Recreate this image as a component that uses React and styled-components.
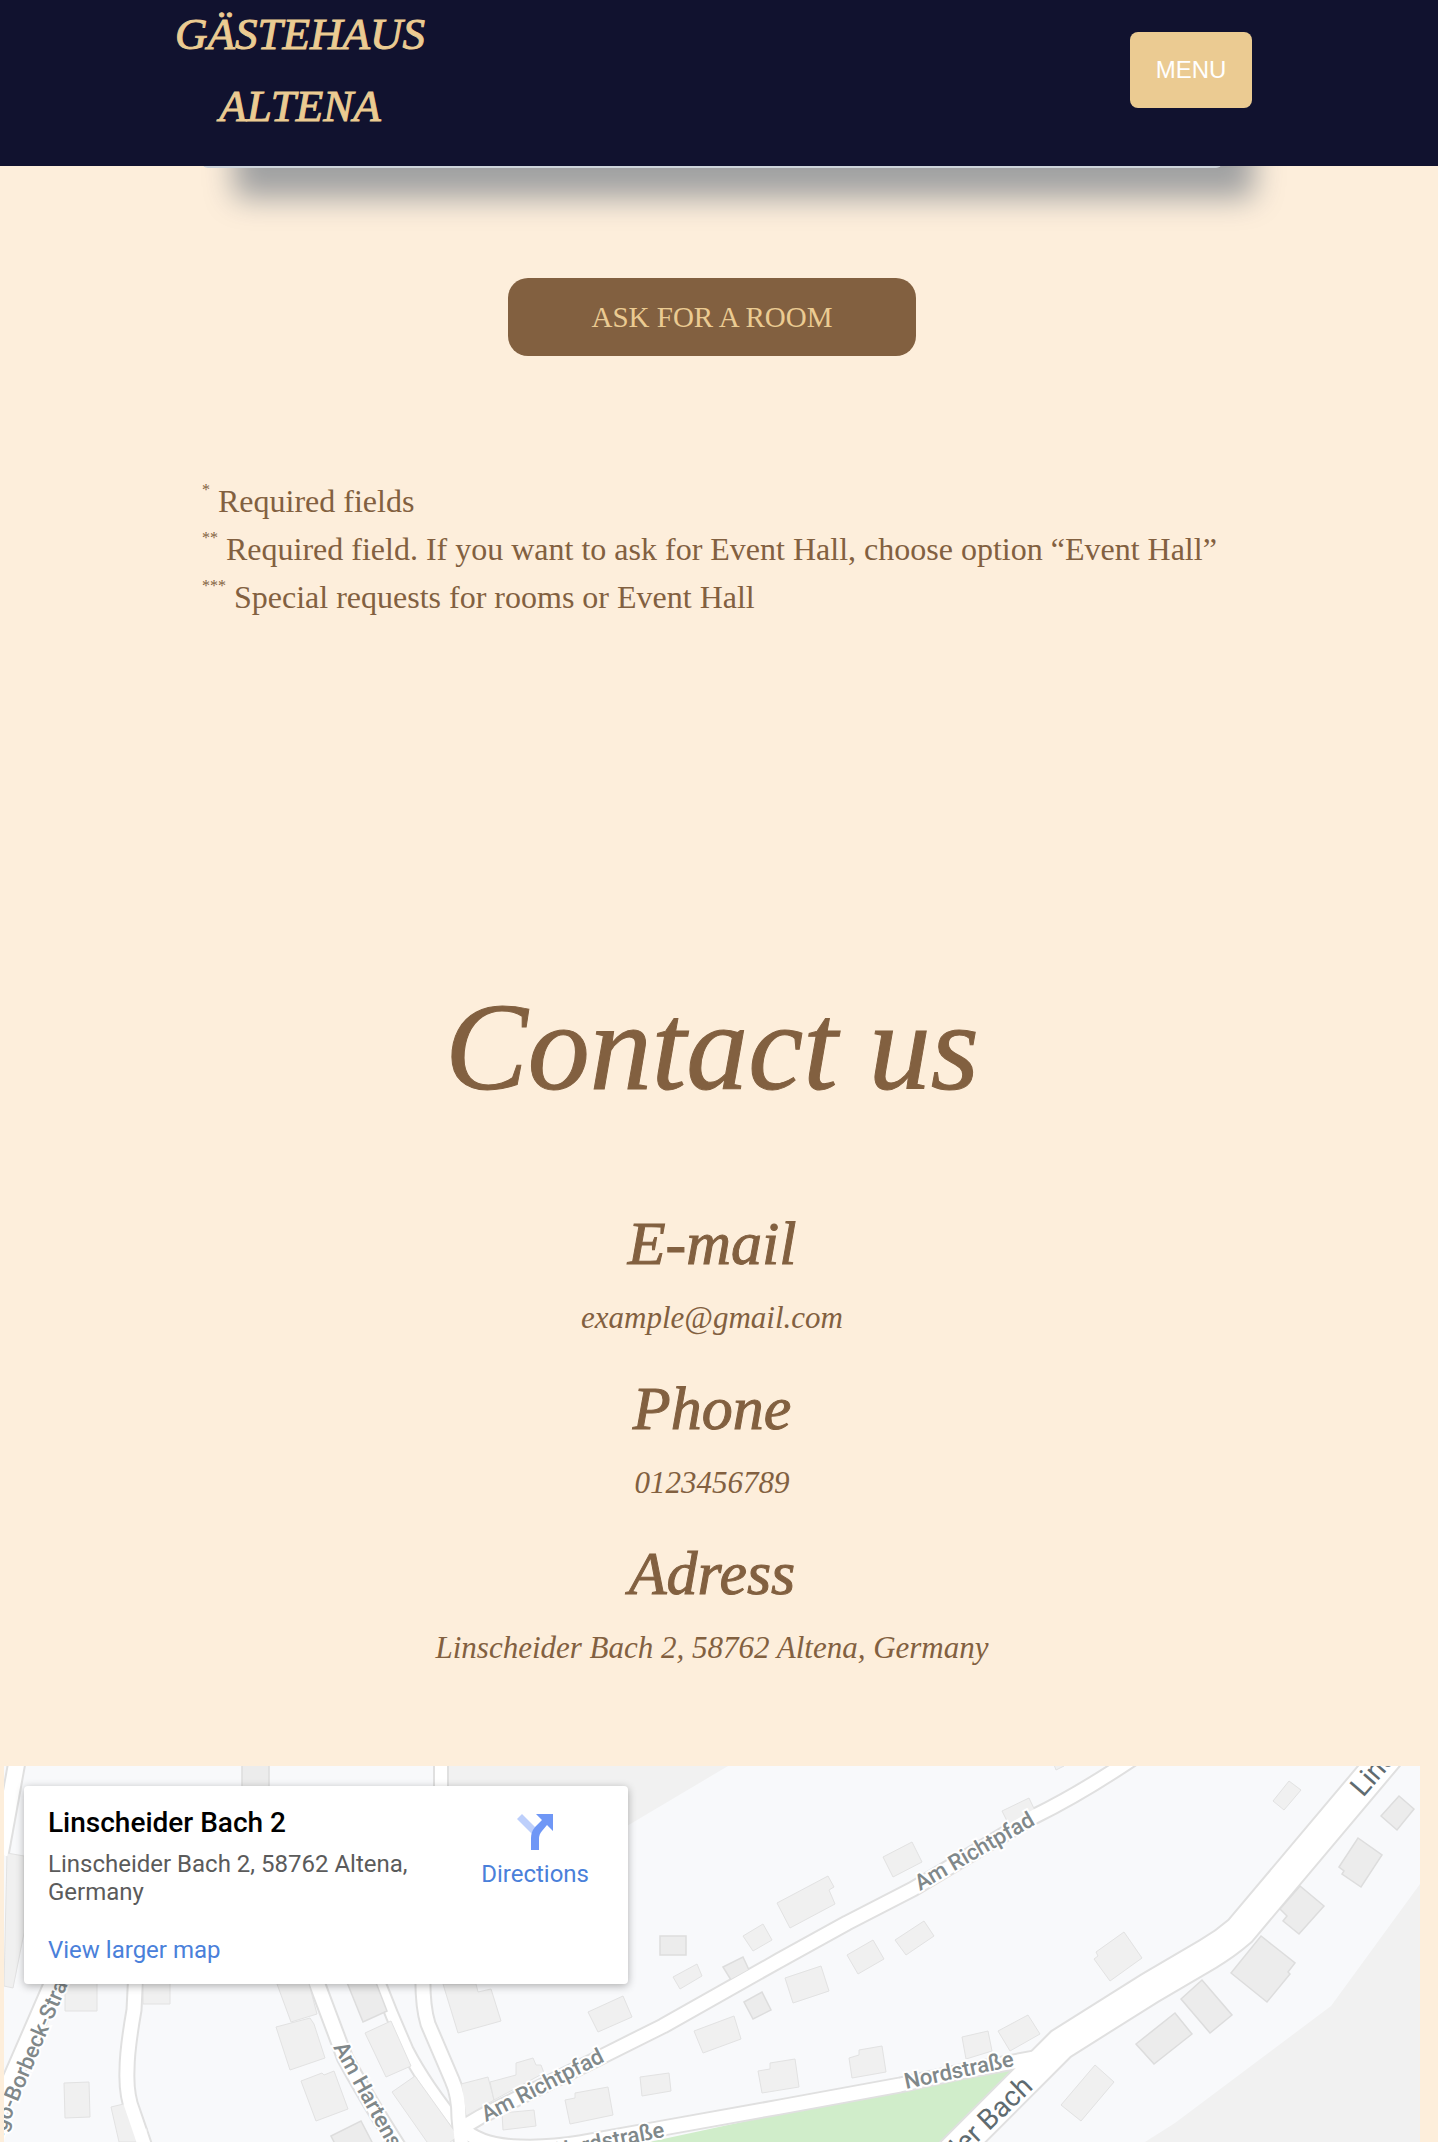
import React from "react";
import styled, { createGlobalStyle } from "styled-components";

const GlobalStyle = createGlobalStyle`
  *, *::before, *::after { box-sizing: border-box; }
  body {
    margin: 0;
    background: #fdeedb;
    color: #826040;
    font-family: "Liberation Serif", serif;
  }
  h1, h2, h3, p { margin: 0; font-weight: 400; }
`;

const Header = styled.header`
  position: relative;
  z-index: 1;
  display: flex;
  align-items: center;
  justify-content: space-between;
  height: 166px;
  padding: 0 186px 26px 173px;
  background: #11122f;
`;

const Brand = styled.h1`
  width: 254px;
  font-size: 45px;
  line-height: 72px;
  font-style: italic;
  text-align: center;
  color: #ebcb92;
  -webkit-text-stroke: 1px currentColor;
`;

const MenuButton = styled.button`
  width: 122px;
  height: 76px;
  border: 0;
  border-radius: 8px;
  background: #ebcb92;
  color: #fff;
  font: 400 24px "Liberation Sans", Arial, sans-serif;
`;

const Page = styled.main`
  padding-right: 14px;
`;

const Booking = styled.section`
  display: flex;
  flex-direction: column;
  padding: 0 202px;
`;

const FormPanel = styled.div`
  height: 82px;
  margin-top: -80px;
  border-radius: 6px;
  background: #ced4da;
  box-shadow: 32px 30px 30px #a0a1a2;
`;

const AskButton = styled.button`
  align-self: center;
  width: 408px;
  height: 78px;
  margin-top: 110px;
  border: 0;
  border-radius: 20px;
  background: #826040;
  color: #ebcb92;
  font: 400 29px "Liberation Serif", serif;
`;

const Notes = styled.div`
  margin-top: 121px;
  font-size: 32px;
  line-height: 48px;

  sup {
    font-size: 16px;
    line-height: 0;
    vertical-align: 17px;
  }
`;

const Contact = styled.section`
  display: flex;
  flex-direction: column;
  align-items: center;
  gap: 29px;
  margin-top: 357px;
  font-style: italic;
  text-align: center;
`;

const ContactTitle = styled.h2`
  margin-bottom: 59px;
  font-size: 124px;
  line-height: 140px;
  -webkit-text-stroke: 1px currentColor;
`;

const ContactItem = styled.div`
  display: flex;
  flex-direction: column;
  gap: 14px;
`;

const ContactLabel = styled.h3`
  font-size: 62px;
  line-height: 74px;
  -webkit-text-stroke: 1px currentColor;
`;

const ContactValue = styled.p`
  font-size: 31px;
  line-height: 48px;

  a { color: inherit; text-decoration: none; }
`;

const MapFrame = styled.section`
  position: relative;
  height: 376px;
  margin: 94px 4px 0;
  overflow: hidden;
  background: #f8f9fb;
  font-family: Roboto, sans-serif;
`;

const MapDrawing = styled.svg`
  display: block;
  width: 100%;
  height: 100%;
`;

const PlaceCard = styled.div`
  position: absolute;
  top: 20px;
  left: 20px;
  display: flex;
  justify-content: space-between;
  width: 604px;
  height: 198px;
  padding: 20px 39px 20px 24px;
  border-radius: 4px;
  background: #fff;
  box-shadow: 0 2px 8px rgba(0, 0, 0, 0.3);
`;

const PlaceText = styled.div`
  width: 380px;
`;

const PlaceName = styled.h3`
  font-size: 28px;
  line-height: 34px;
  font-weight: 500;
  color: #000;
`;

const PlaceAddress = styled.p`
  margin: 10px 0 30px;
  font-size: 24px;
  line-height: 28px;
  color: #5b5b5b;
`;

const MapLink = styled.a`
  display: block;
  font-size: 24px;
  line-height: 28px;
  color: #4a80da;
  text-decoration: none;
`;

const DirectionsLink = styled(MapLink)`
  display: flex;
  flex-direction: column;
  align-items: center;
  gap: 10px;
  padding-top: 8px;
`;

const contacts = [
  { label: "E-mail", value: "example@gmail.com", href: "mailto:example@gmail.com" },
  { label: "Phone", value: "0123456789", href: "tel:0123456789" },
  { label: "Adress", value: "Linscheider Bach 2, 58762 Altena, Germany" },
];

const footpaths = [
  { w: 11, d: "M374 230 L392 275 L407 310 Q425 345 460 388" },
];

const roads = [
  { w: 15, d: "M18 16 L0 115" },
  { w: 17, d: "M66 215 L55 240 L12 339 L-12 395" },
  { w: 13, d: "M136 230 L134 270 Q127 310 127 330 Q126 355 133 372 L146 410" },
  { w: 14, d: "M310 225 L345 318 Q365 355 400 410" },
  { w: 12, d: "M441 10 L441 60" },
  { w: 13, d: "M423 230 Q422 265 428 284 L452 340 Q459 355 459 378 L462 410" },
  { w: 13, d: "M460 389 L480 377 L607 314 L663 286 L780 220 L847 183 L913 149 L1035 76 Q1080 54 1135 17" },
  { w: 13, d: "M462 388 Q480 406 520 407 Q550 408 580 403 L663 388 L780 367 L900 345 L960 332 L1045 316" },
  { w: 30, d: "M1405 -5 L1240 191 Q1225 204 1208 214 L1150 248 L1061 304 L940 425" },
];

const houses = [
  "7,113 24,116 24,193 13,248 4,246",
  "65,240 97,240 97,271 65,271",
  "143,240 170,240 170,264 143,264",
  "64,343 89,342 90,377 65,378",
  "111,367 132,362 138,390 147,388 149,402 119,402",
  "277,244 308,240 317,274 291,282",
  "276,287 310,278 314,284 325,318 290,330",
  "301,341 322,333 324,335 334,331 348,369 316,381",
  "365,293 391,281 411,326 386,337",
  "392,352 415,336 458,396 440,410 427,402",
  "443,244 476,244 478,252 491,249 501,281 458,293",
  "461,344 488,337 494,360 466,376",
  "490,342 516,335 516,323 533,318 536,325 541,325 544,333 494,360",
  "502,373 534,370 536,386 503,390",
  "588,272 623,256 632,277 598,292",
  "673,237 697,224 702,236 680,249",
  "743,196 763,184 772,200 753,211",
  "777,163 828,136 834,147 829,150 835,164 790,188",
  "883,117 912,102 922,122 893,137",
  "785,238 821,226 829,251 793,263",
  "847,215 873,200 884,219 858,234",
  "895,200 924,181 934,196 906,215",
  "694,291 734,276 741,299 703,313",
  "640,337 669,333 671,351 642,356",
  "565,360 575,358 575,353 608,347 613,375 570,384",
  "758,331 770,329 770,323 795,319 799,347 762,353",
  "849,318 859,315 859,310 882,306 886,332 852,338",
  "1002,71 1029,58 1038,77 1031,82 1032,83 1013,93",
  "1053,22 1064,26 1056,30",
  "1273,61 1289,41 1301,50 1284,70",
  "1094,219 1098,216 1096,212 1124,192 1142,218 1110,241",
  "962,297 988,291 992,311 966,319",
  "998,291 1028,275 1040,294 1010,311",
  "1061,365 1095,325 1114,342 1081,381",
];

const outlinedHouses = [
  "242,20 269,20 269,60 242,60",
  "660,196 686,196 686,215 660,215",
  "723,227 743,217 749,230 731,240",
  "744,262 762,252 771,270 753,279",
  "346,240 375,240 387,271 363,282",
  "331,396 361,381 373,404 335,404",
  "1381,76 1399,56 1414,69 1397,90",
  "1339,127 1358,98 1382,115 1361,147 1342,134 1344,131",
  "1280,169 1300,146 1324,166 1299,194 1283,181 1287,176",
  "1231,233 1261,196 1295,223 1288,232 1290,234 1267,262",
  "1181,259 1202,240 1232,275 1210,293",
  "1136,304 1175,273 1192,294 1154,324",
];

const streets = [
  { name: "Hugo-Borbeck-Straße", x: -6, y: 418, angle: -67 },
  { name: "Am Hartenstein", x: 333, y: 307, angle: 61 },
  { name: "Am Richtpfad", x: 486, y: 382, angle: -27 },
  { name: "Am Richtpfad", x: 920, y: 151, angle: -30 },
  { name: "Nordstraße", x: 906, y: 349, angle: -12 },
  { name: "Nordstraße", x: 556, y: 418, angle: -11 },
];

const mainStreets = [
  { name: "Linscheider Bach", x: 1363, y: 58, angle: -49 },
  { name: "Linscheider Bach", x: 1034, y: 348, angle: -44, anchor: "end" },
];

function RoadEdges({ items }) {
  return (
    <g fill="none" stroke="#e0e0e0" strokeLinejoin="round">
      {items.map((r) => <path key={r.d} d={r.d} strokeWidth={r.w + 4} />)}
    </g>
  );
}

function RoadSurfaces({ items }) {
  return (
    <g fill="none" stroke="#fff" strokeLinejoin="round">
      {items.map((r) => <path key={r.d} d={r.d} strokeWidth={r.w} />)}
    </g>
  );
}

function StreetMap() {
  return (
    <MapDrawing viewBox="4 26 1416 376" preserveAspectRatio="xMinYMin slice" aria-hidden="true">
      <polygon points="448,26 728,26 600,102 448,102" fill="#f1f1f1" />
      <polygon points="1420,144 1331,266 1175,383 1145,402 1420,402" fill="#f1f1f1" />
      <polygon points="640,404 900,348 958,334 1022,322 958,385 940,404" fill="#d0edca" />
      <RoadEdges items={footpaths} />
      <RoadSurfaces items={footpaths} />
      <RoadEdges items={roads} />
      <g fill="#f0f0f0" stroke="#e2e2e2" strokeWidth="1">
        {houses.map((p) => <polygon key={p} points={p} />)}
      </g>
      <g fill="#ececec" stroke="#dddddd" strokeWidth="1.5">
        {outlinedHouses.map((p) => <polygon key={p} points={p} />)}
      </g>
      <RoadSurfaces items={roads} />
      <g fill="#80888a" stroke="#fff" strokeWidth="4" paintOrder="stroke" fontSize="22" fontWeight="500">
        {streets.map((s) => (
          <text key={`${s.name}${s.x}`} transform={`translate(${s.x} ${s.y}) rotate(${s.angle})`}>{s.name}</text>
        ))}
      </g>
      <g fill="#5f6b70" fontSize="28">
        {mainStreets.map((s) => (
          <text key={s.x} textAnchor={s.anchor} transform={`translate(${s.x} ${s.y}) rotate(${s.angle})`}>{s.name}</text>
        ))}
      </g>
    </MapDrawing>
  );
}

function DirectionsIcon() {
  return (
    <svg width="37" height="36" viewBox="0 0 37 36" aria-hidden="true">
      <path d="M0 5 L5 0 L18 13 L15 20 Z" fill="#bdcffb" />
      <path d="M14 36 V24 Q14 18 18 13 L25 6 L19 0 H36 V17 L30 11 L25 17 Q22 20 22 25 V36 Z" fill="#6f97f6" />
    </svg>
  );
}

export default function App() {
  return (
    <>
      <GlobalStyle />
      <Header>
        <Brand>GÄSTEHAUS ALTENA</Brand>
        <MenuButton type="button">MENU</MenuButton>
      </Header>
      <Page>
        <Booking>
          <FormPanel />
          <AskButton type="button">ASK FOR A ROOM</AskButton>
          <Notes>
            <p><sup>*</sup> Required fields</p>
            <p><sup>**</sup> Required field. If you want to ask for Event Hall, choose option “Event Hall”</p>
            <p><sup>***</sup> Special requests for rooms or Event Hall</p>
          </Notes>
        </Booking>
        <Contact>
          <ContactTitle>Contact us</ContactTitle>
          {contacts.map((c) => (
            <ContactItem key={c.label}>
              <ContactLabel>{c.label}</ContactLabel>
              <ContactValue>{c.href ? <a href={c.href}>{c.value}</a> : c.value}</ContactValue>
            </ContactItem>
          ))}
        </Contact>
        <MapFrame>
          <StreetMap />
          <PlaceCard>
            <PlaceText>
              <PlaceName>Linscheider Bach 2</PlaceName>
              <PlaceAddress>Linscheider Bach 2, 58762 Altena, Germany</PlaceAddress>
              <MapLink href="#map">View larger map</MapLink>
            </PlaceText>
            <DirectionsLink href="#directions">
              <DirectionsIcon />
              Directions
            </DirectionsLink>
          </PlaceCard>
        </MapFrame>
      </Page>
    </>
  );
}
